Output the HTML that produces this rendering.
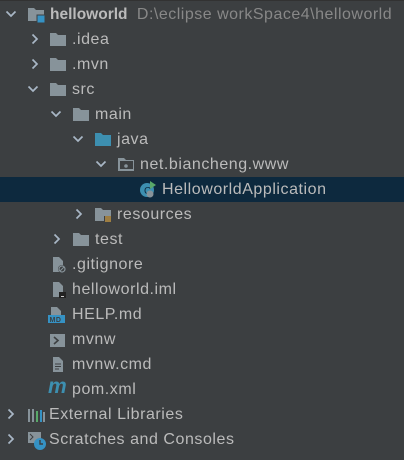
<!DOCTYPE html>
<html><head><style>
body{margin:0;width:404px;height:460px;background:#3c3f41;overflow:hidden;font-family:"Liberation Sans",sans-serif;font-size:16px;letter-spacing:0.55px;color:#bbbbbb;position:relative}
.r{position:absolute;left:0;width:404px;height:25px}
.sel{background:#0d293e}
.t{position:absolute;top:4px;white-space:nowrap;line-height:18px}
.a{position:absolute;top:6px;width:12px;height:12px}
.i{position:absolute;top:4px;width:18px;height:17px}
svg{display:block}
</style></head><body>
<div style="position:absolute;top:0;left:0;width:404px;height:1px;background:#323232"></div>
<svg width="0" height="0" style="position:absolute">
<defs>
<symbol id="right" viewBox="0 0 12 12"><path d="M3.5 1.5 L8 6 L3.5 10.5" fill="none" stroke="#a9b7c6" stroke-width="1.7"/></symbol>
<symbol id="down" viewBox="0 0 12 12"><path d="M1.5 3.5 L6 8 L10.5 3.5" fill="none" stroke="#a9b7c6" stroke-width="1.7"/></symbol>
<symbol id="fold" viewBox="0 0 18 17"><path d="M1 2 H7 L9 4 H17 V15 H1Z" fill="#87939a"/></symbol>
<symbol id="foldb" viewBox="0 0 18 17"><path d="M1 2 H7 L9 4 H17 V15 H1Z" fill="#3d8fb0"/></symbol>
<symbol id="file" viewBox="0 0 18 17"><path d="M4 1 H10 L14 5 V16 H4Z" fill="#87939a"/></symbol>
</defs></svg>

<div class="r" style="top:2px">
<svg class="a" style="left:5px"><use href="#down"/></svg>
<svg class="i" style="left:27px"><path d="M1 2 H7 L9 4 H17 V15 H1Z" fill="#87939a"/><rect x="10" y="9" width="8" height="8" fill="#3592c4" stroke="#3c3f41"/></svg>
<span class="t" style="left:50px;letter-spacing:0"><b style="color:#bbb;font-size:15.5px">helloworld</b> <span style="color:#888;letter-spacing:0.5px">&nbsp;D:\eclipse workSpace4\helloworld</span></span></div>

<div class="r" style="top:27px"><svg class="a" style="left:29px"><use href="#right"/></svg><svg class="i" style="left:49px"><use href="#fold"/></svg><span class="t" style="left:72px">.idea</span></div>
<div class="r" style="top:52px"><svg class="a" style="left:29px"><use href="#right"/></svg><svg class="i" style="left:49px"><use href="#fold"/></svg><span class="t" style="left:72px">.mvn</span></div>
<div class="r" style="top:77px"><svg class="a" style="left:27px"><use href="#down"/></svg><svg class="i" style="left:49px"><use href="#fold"/></svg><span class="t" style="left:72px">src</span></div>
<div class="r" style="top:102px"><svg class="a" style="left:50px"><use href="#down"/></svg><svg class="i" style="left:72px"><use href="#fold"/></svg><span class="t" style="left:95px">main</span></div>
<div class="r" style="top:127px"><svg class="a" style="left:72px"><use href="#down"/></svg><svg class="i" style="left:94px"><use href="#foldb"/></svg><span class="t" style="left:117px">java</span></div>
<div class="r" style="top:152px"><svg class="a" style="left:95px"><use href="#down"/></svg><svg class="i" style="left:117px"><path d="M1 2 H7 L9 4 H17 V15 H1Z" fill="#87939a"/><rect x="3" y="5" width="13" height="8" fill="#3c3f41"/><circle cx="9" cy="10" r="1.8" fill="#87939a"/></svg><span class="t" style="left:140px">net.biancheng.www</span></div>
<div class="r sel" style="top:177px"><svg class="i" style="left:139px"><circle cx="8" cy="9" r="7" fill="#3d8fb0"/><text x="5" y="13" font-size="10" fill="#0d293e" font-family="Liberation Sans">C</text><path d="M11 0 L17 4 L11 8Z" fill="#59a869"/><circle cx="11" cy="13" r="3.5" fill="#87939a"/></svg><span class="t" style="left:162px;color:#bbb">HelloworldApplication</span></div>
<div class="r" style="top:202px"><svg class="a" style="left:73px"><use href="#right"/></svg><svg class="i" style="left:94px"><use href="#fold"/><rect x="10" y="10" width="7" height="7" fill="#3c3f41"/><path d="M11 11h6M11 13h6M11 15h6" stroke="#d9a343" stroke-width="1.2"/></svg><span class="t" style="left:117px">resources</span></div>
<div class="r" style="top:227px"><svg class="a" style="left:51px"><use href="#right"/></svg><svg class="i" style="left:72px"><use href="#fold"/></svg><span class="t" style="left:95px">test</span></div>
<div class="r" style="top:252px"><svg class="i" style="left:49px"><use href="#file"/><circle cx="13" cy="13" r="4" fill="#3c3f41"/><circle cx="13" cy="13" r="3" fill="none" stroke="#87939a" stroke-width="1.2"/><path d="M11 15 L15 11" stroke="#87939a"/></svg><span class="t" style="left:72px">.gitignore</span></div>
<div class="r" style="top:277px"><svg class="i" style="left:49px"><use href="#file"/><rect x="10" y="11" width="7" height="6" fill="#222"/><rect x="12" y="15" width="3" height="1" fill="#ccc"/></svg><span class="t" style="left:72px">helloworld.iml</span></div>
<div class="r" style="top:302px"><svg class="i" style="left:47px"><use href="#file"/><rect x="1" y="9" width="17" height="8" fill="#3592c4"/><text x="2.5" y="16" font-size="7" font-weight="bold" fill="#3c3f41" font-family="Liberation Sans">MD</text></svg><span class="t" style="left:72px">HELP.md</span></div>
<div class="r" style="top:327px"><svg class="i" style="left:49px"><rect x="1" y="3" width="15" height="13" fill="#87939a"/><path d="M5 6 L9 9.5 L5 13" fill="none" stroke="#3c3f41" stroke-width="1.6"/></svg><span class="t" style="left:72px">mvnw</span></div>
<div class="r" style="top:352px"><svg class="i" style="left:49px"><use href="#file"/><path d="M6 8h6M6 10.5h6M6 13h4" stroke="#3c3f41"/></svg><span class="t" style="left:72px">mvnw.cmd</span></div>
<div class="r" style="top:377px"><span class="t" style="left:48px;top:1px;color:#3d8fb0;font-weight:bold;font-style:italic;font-size:21px;letter-spacing:0">m</span><span class="t" style="left:72px">pom.xml</span></div>
<div class="r" style="top:402px"><svg class="a" style="left:5px"><use href="#right"/></svg><svg class="i" style="left:27px"><rect x="1" y="3" width="2" height="13" fill="#87939a"/><rect x="5" y="3" width="2" height="13" fill="#87939a"/><rect x="9" y="5" width="2" height="11" fill="#59a869"/><rect x="13" y="4" width="2" height="12" fill="#3592c4"/><rect x="16" y="6" width="2" height="10" fill="#87939a"/></svg><span class="t" style="left:49px">External Libraries</span></div>
<div class="r" style="top:427px"><svg class="a" style="left:5px"><use href="#right"/></svg><svg class="i" style="left:27px;width:20px;height:20px"><rect x="1" y="1" width="13" height="11" fill="#87939a"/><path d="M3 3 L6 6 L3 9" stroke="#3c3f41" fill="none"/><circle cx="13" cy="13" r="6" fill="#3592c4"/><path d="M13 9 V13 H16" stroke="#3c3f41" fill="none" stroke-width="1.4"/></svg><span class="t" style="left:49px">Scratches and Consoles</span></div>
</body></html>
